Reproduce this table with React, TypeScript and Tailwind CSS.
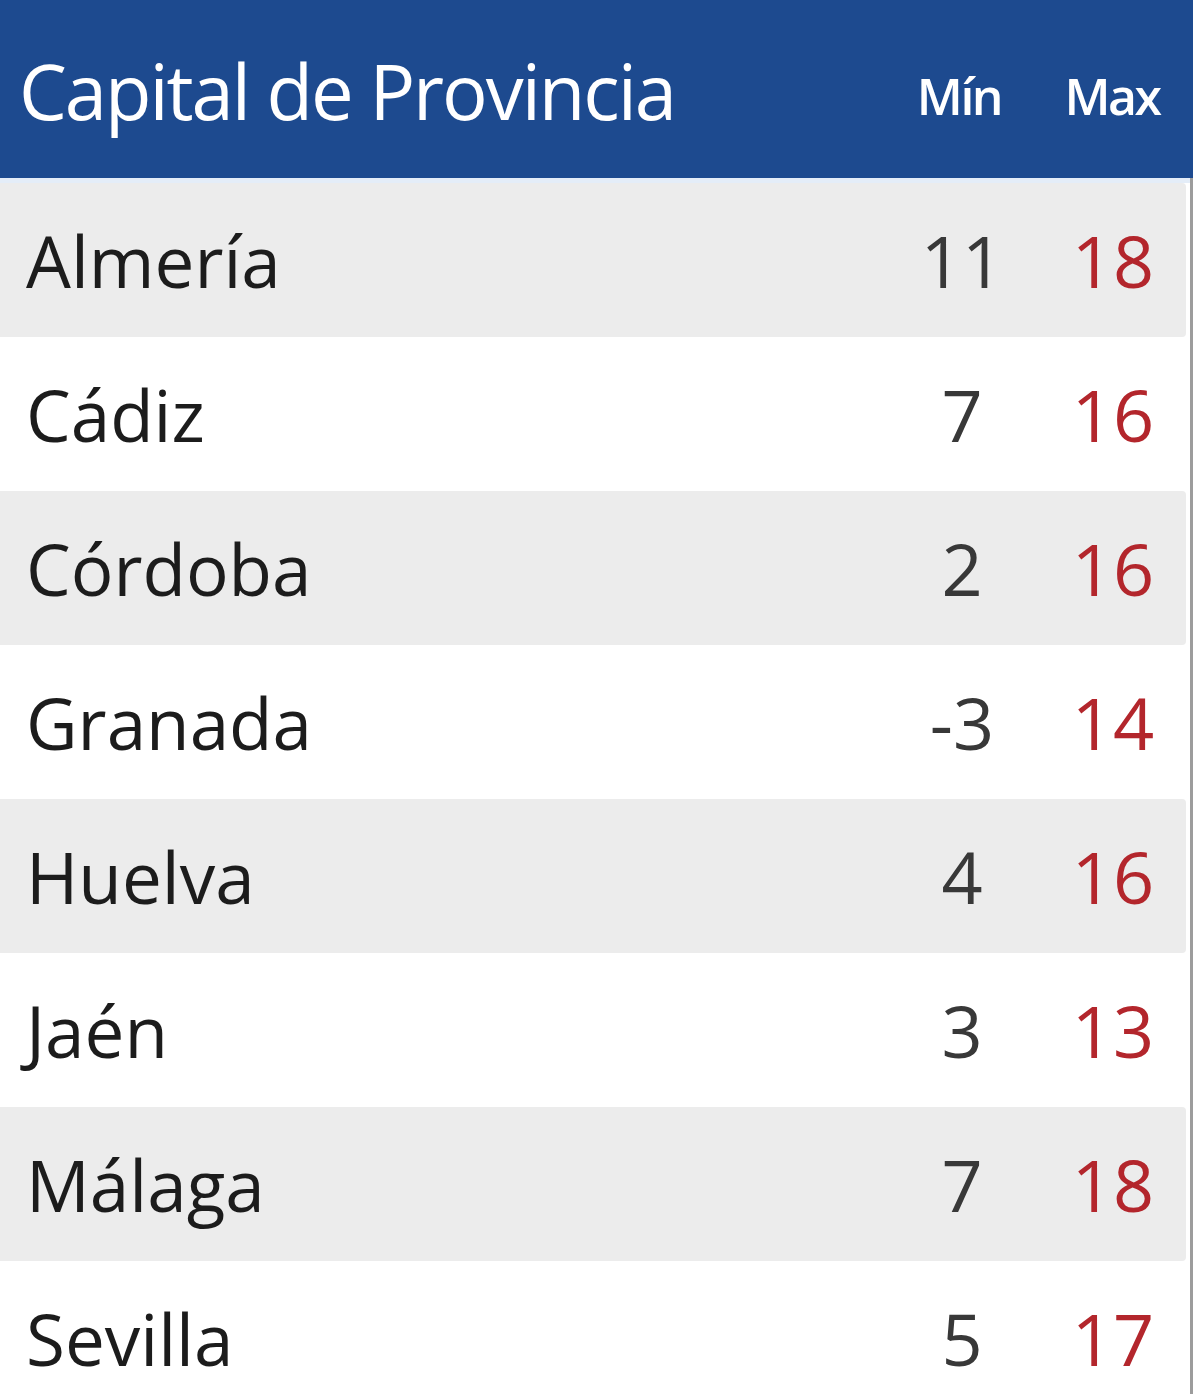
const rows = [
  { name: "Almería", min: "11", max: "18" },
  { name: "Cádiz", min: "7", max: "16" },
  { name: "Córdoba", min: "2", max: "16" },
  { name: "Granada", min: "-3", max: "14" },
  { name: "Huelva", min: "4", max: "16" },
  { name: "Jaén", min: "3", max: "13" },
  { name: "Málaga", min: "7", max: "18" },
  { name: "Sevilla", min: "5", max: "17" },
]

export default function App() {
  return (
    <div className="w-[1200px] h-[1394px] overflow-hidden bg-white font-['Open_Sans',sans-serif]">
      <div className="w-[1193px] border-r-[3px] border-[#9c9c9c]">
        {/* header */}
        <div className="h-[178px] bg-[#1d4a8f] flex items-center text-white -mr-[3px]">
          <div className="flex-1 pl-[19px] text-[76px] tracking-[-0.027em] leading-none pt-[4px]">Capital de Provincia</div>
          <div className="w-[156px] pr-[12px] text-center text-[50px] font-semibold tracking-[-0.05em] leading-none pt-[14px]">Mín</div>
          <div className="w-[150px] pr-[12px] text-center text-[50px] font-semibold tracking-[-0.05em] leading-none pt-[14px]">Max</div>
        </div>
        <div className="h-[5px] bg-[#e4edf8]" />

        {rows.map((r, i) => (
          <div
            key={r.name}
            className={`h-[154px] flex items-center mr-[4px] rounded-r-[4px] ${i % 2 === 0 ? "bg-[#ececec]" : "bg-white"}`}
          >
            <div className="flex-1 pl-[26px] text-[71px] text-[#1c1c1c] leading-none">{r.name}</div>
            <div className="w-[156px] text-center text-[72px] text-[#383838] leading-none">{r.min}</div>
            <div className="w-[146px] text-center text-[72px] text-[#b3262c] leading-none">{r.max}</div>
          </div>
        ))}
      </div>
    </div>
  )
}
